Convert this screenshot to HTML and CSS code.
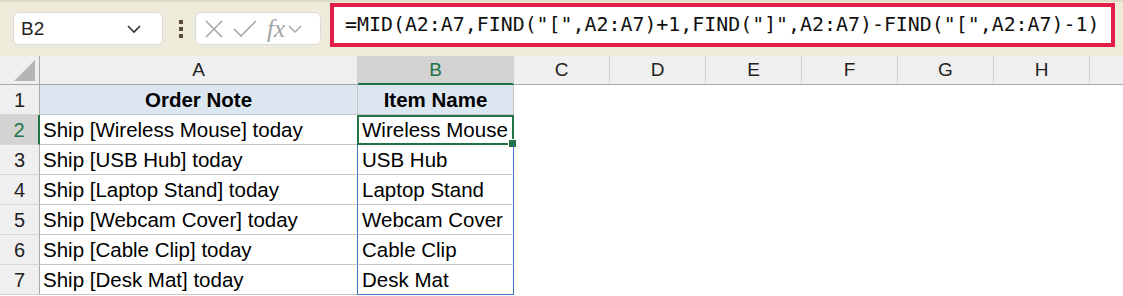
FILE: index.html
```html
<!DOCTYPE html>
<html lang="en">
<head>
    <meta charset="UTF-8">
    <title>Sheet - MID / FIND</title>
    <link rel="stylesheet" href="styles.css">
</head>
<body>
    <!-- formula bar -->
    <div class="toolbar">
        <div class="namebox">
            <span>B2</span>
            <svg class="chev" width="16" height="10" viewBox="0 0 16 10"><path d="M2 2 L8 8 L14 2" fill="none" stroke="#333" stroke-width="1.6"/></svg>
        </div>
        <svg class="dots" width="6" height="20" viewBox="0 0 6 20"><rect x="1" y="1" width="4" height="4" fill="#5b4a3f"/><rect x="1" y="8" width="4" height="4" fill="#5b4a3f"/><rect x="1" y="15" width="4" height="4" fill="#5b4a3f"/></svg>
        <div class="fnbox">
            <svg width="20" height="20" viewBox="0 0 20 20"><path d="M2 2 L18 18 M18 2 L2 18" stroke="#a3a3a3" stroke-width="1.5"/></svg>
            <svg width="24" height="20" viewBox="0 0 24 20"><path d="M1 10 L8 17 L23 2" fill="none" stroke="#a3a3a3" stroke-width="1.5"/></svg>
            <span class="fx">fx</span>
            <svg width="14" height="10" viewBox="0 0 14 10"><path d="M1 2 L7 8 L13 2" fill="none" stroke="#a3a3a3" stroke-width="1.4"/></svg>
        </div>
        <div class="formula">=MID(A2:A7,FIND("[",A2:A7)+1,FIND("]",A2:A7)-FIND("[",A2:A7)-1)</div>
    </div>

    <!-- grid -->
    <div class="sheet">
        <div class="corner"><span class="tri"></span></div>
        <div class="colhead">A</div>
        <div class="colhead sel">B</div>
        <div class="colhead">C</div>
        <div class="colhead">D</div>
        <div class="colhead">E</div>
        <div class="colhead">F</div>
        <div class="colhead">G</div>
        <div class="colhead">H</div>
        <div class="colhead last"></div>

        <div class="rowhead">1</div>
        <div class="cell hdr">Order Note</div>
        <div class="cell hdr">Item Name</div>
        <div class="empty"></div>

        <div class="rowhead sel">2</div>
        <div class="cell">Ship [Wireless Mouse] today</div>
        <div class="cell spill active">Wireless Mouse<span class="handle"></span></div>
        <div class="empty"></div>

        <div class="rowhead">3</div>
        <div class="cell">Ship [USB Hub] today</div>
        <div class="cell spill">USB Hub</div>
        <div class="empty"></div>

        <div class="rowhead">4</div>
        <div class="cell">Ship [Laptop Stand] today</div>
        <div class="cell spill">Laptop Stand</div>
        <div class="empty"></div>

        <div class="rowhead">5</div>
        <div class="cell">Ship [Webcam Cover] today</div>
        <div class="cell spill">Webcam Cover</div>
        <div class="empty"></div>

        <div class="rowhead">6</div>
        <div class="cell">Ship [Cable Clip] today</div>
        <div class="cell spill">Cable Clip</div>
        <div class="empty"></div>

        <div class="rowhead">7</div>
        <div class="cell">Ship [Desk Mat] today</div>
        <div class="cell spill end">Desk Mat</div>
        <div class="empty"></div>
    </div>
</body>
</html>
```

FILE: styles.css
```css
body {
    margin: 0;
    background: #ffffff;
    font-family: "Liberation Sans", Arial, sans-serif;
    overflow: hidden;
}

.toolbar {
    height: 56px;
    background: #eeebdb;
    border-top: 2px solid #dedbc9;
    box-sizing: border-box;
    display: flex;
    align-items: flex-start;
    padding-left: 13px;
}
.namebox {
    margin-top: 10px;
    width: 150px;
    height: 33px;
    box-sizing: border-box;
    background: #fff;
    border: 1px solid #dcdcdc;
    border-radius: 6px;
    display: flex;
    align-items: center;
    justify-content: space-between;
    padding: 0 20px 0 7px;
    font-size: 19px;
    color: #222;
}
.dots {
    margin: 17px 0 0 15px;
}
.fnbox {
    margin: 10px 0 0 11px;
    width: 126px;
    height: 33px;
    box-sizing: border-box;
    background: #fff;
    border: 1px solid #dcdcdc;
    border-radius: 6px;
    display: flex;
    align-items: center;
    gap: 9px;
    padding-left: 8px;
}
.fnbox .fx {
    font-family: "Liberation Serif", serif;
    font-style: italic;
    font-size: 25px;
    line-height: 28px;
    color: #a3a3a3;
    margin-left: 1px;
    margin-right: -6px;
}
.formula {
    margin: 1px 0 0 9px;
    width: 785px;
    height: 44px;
    box-sizing: border-box;
    border: 4px solid #e21e4a;
    background: #fff;
    font-family: "DejaVu Sans Mono", "Liberation Mono", monospace;
    font-size: 19.9px;
    line-height: 36px;
    padding-left: 11px;
    color: #111;
    white-space: nowrap;
}

.sheet {
    display: grid;
    grid-template-columns: 40px 318px 156px repeat(6, 96px) 1fr;
    grid-template-rows: 29px repeat(7, 30px);
}
.corner {
    background: #efefef;
    border-right: 1px solid #a9a9a9;
    border-bottom: 1px solid #a9a9a9;
    position: relative;
}
.tri {
    position: absolute;
    right: 4px;
    bottom: 3px;
    width: 0;
    height: 0;
    border-left: 21px solid transparent;
    border-bottom: 21px solid #b5b5b5;
}
.colhead {
    background: #efefef;
    border-right: 1px solid #d2d2d2;
    border-bottom: 1px solid #a9a9a9;
    font-size: 19px;
    color: #222;
    text-align: center;
    line-height: 28px;
}
.colhead.sel {
    background: #d3d3d3;
    color: #217346;
    border-bottom: 2px solid #217346;
    line-height: 27px;
}
.colhead.last {
    border-right: none;
}
.rowhead {
    background: #efefef;
    border-right: 1px solid #a9a9a9;
    border-bottom: 1px solid #d6d6d6;
    font-size: 20px;
    color: #222;
    text-align: center;
    line-height: 30px;
}
.rowhead.sel {
    background: #d3d3d3;
    color: #217346;
    border-right: 2px solid #217346;
}
.cell {
    border-right: 1px solid #c6c6c6;
    border-bottom: 1px solid #c6c6c6;
    font-size: 20.5px;
    line-height: 30px;
    padding-left: 3px;
    color: #000;
    white-space: nowrap;
    position: relative;
}
.cell.hdr {
    background: #dce6f1;
    font-weight: bold;
    text-align: center;
    padding-left: 0;
}
.cell.spill {
    border-left: 1px solid #4472c4;
    border-right: 1px solid #4472c4;
    margin-left: -1px;
    padding-left: 4px;
}
.cell.spill.end {
    border-bottom: 1px solid #4472c4;
}
.cell.active {
    outline: 2px solid #217346;
    outline-offset: -2px;
}
.handle {
    position: absolute;
    right: -4px;
    bottom: -4px;
    width: 7px;
    height: 7px;
    background: #217346;
    border: 1px solid #fff;
}
.empty {
    grid-column: 4 / -1;
}
```
